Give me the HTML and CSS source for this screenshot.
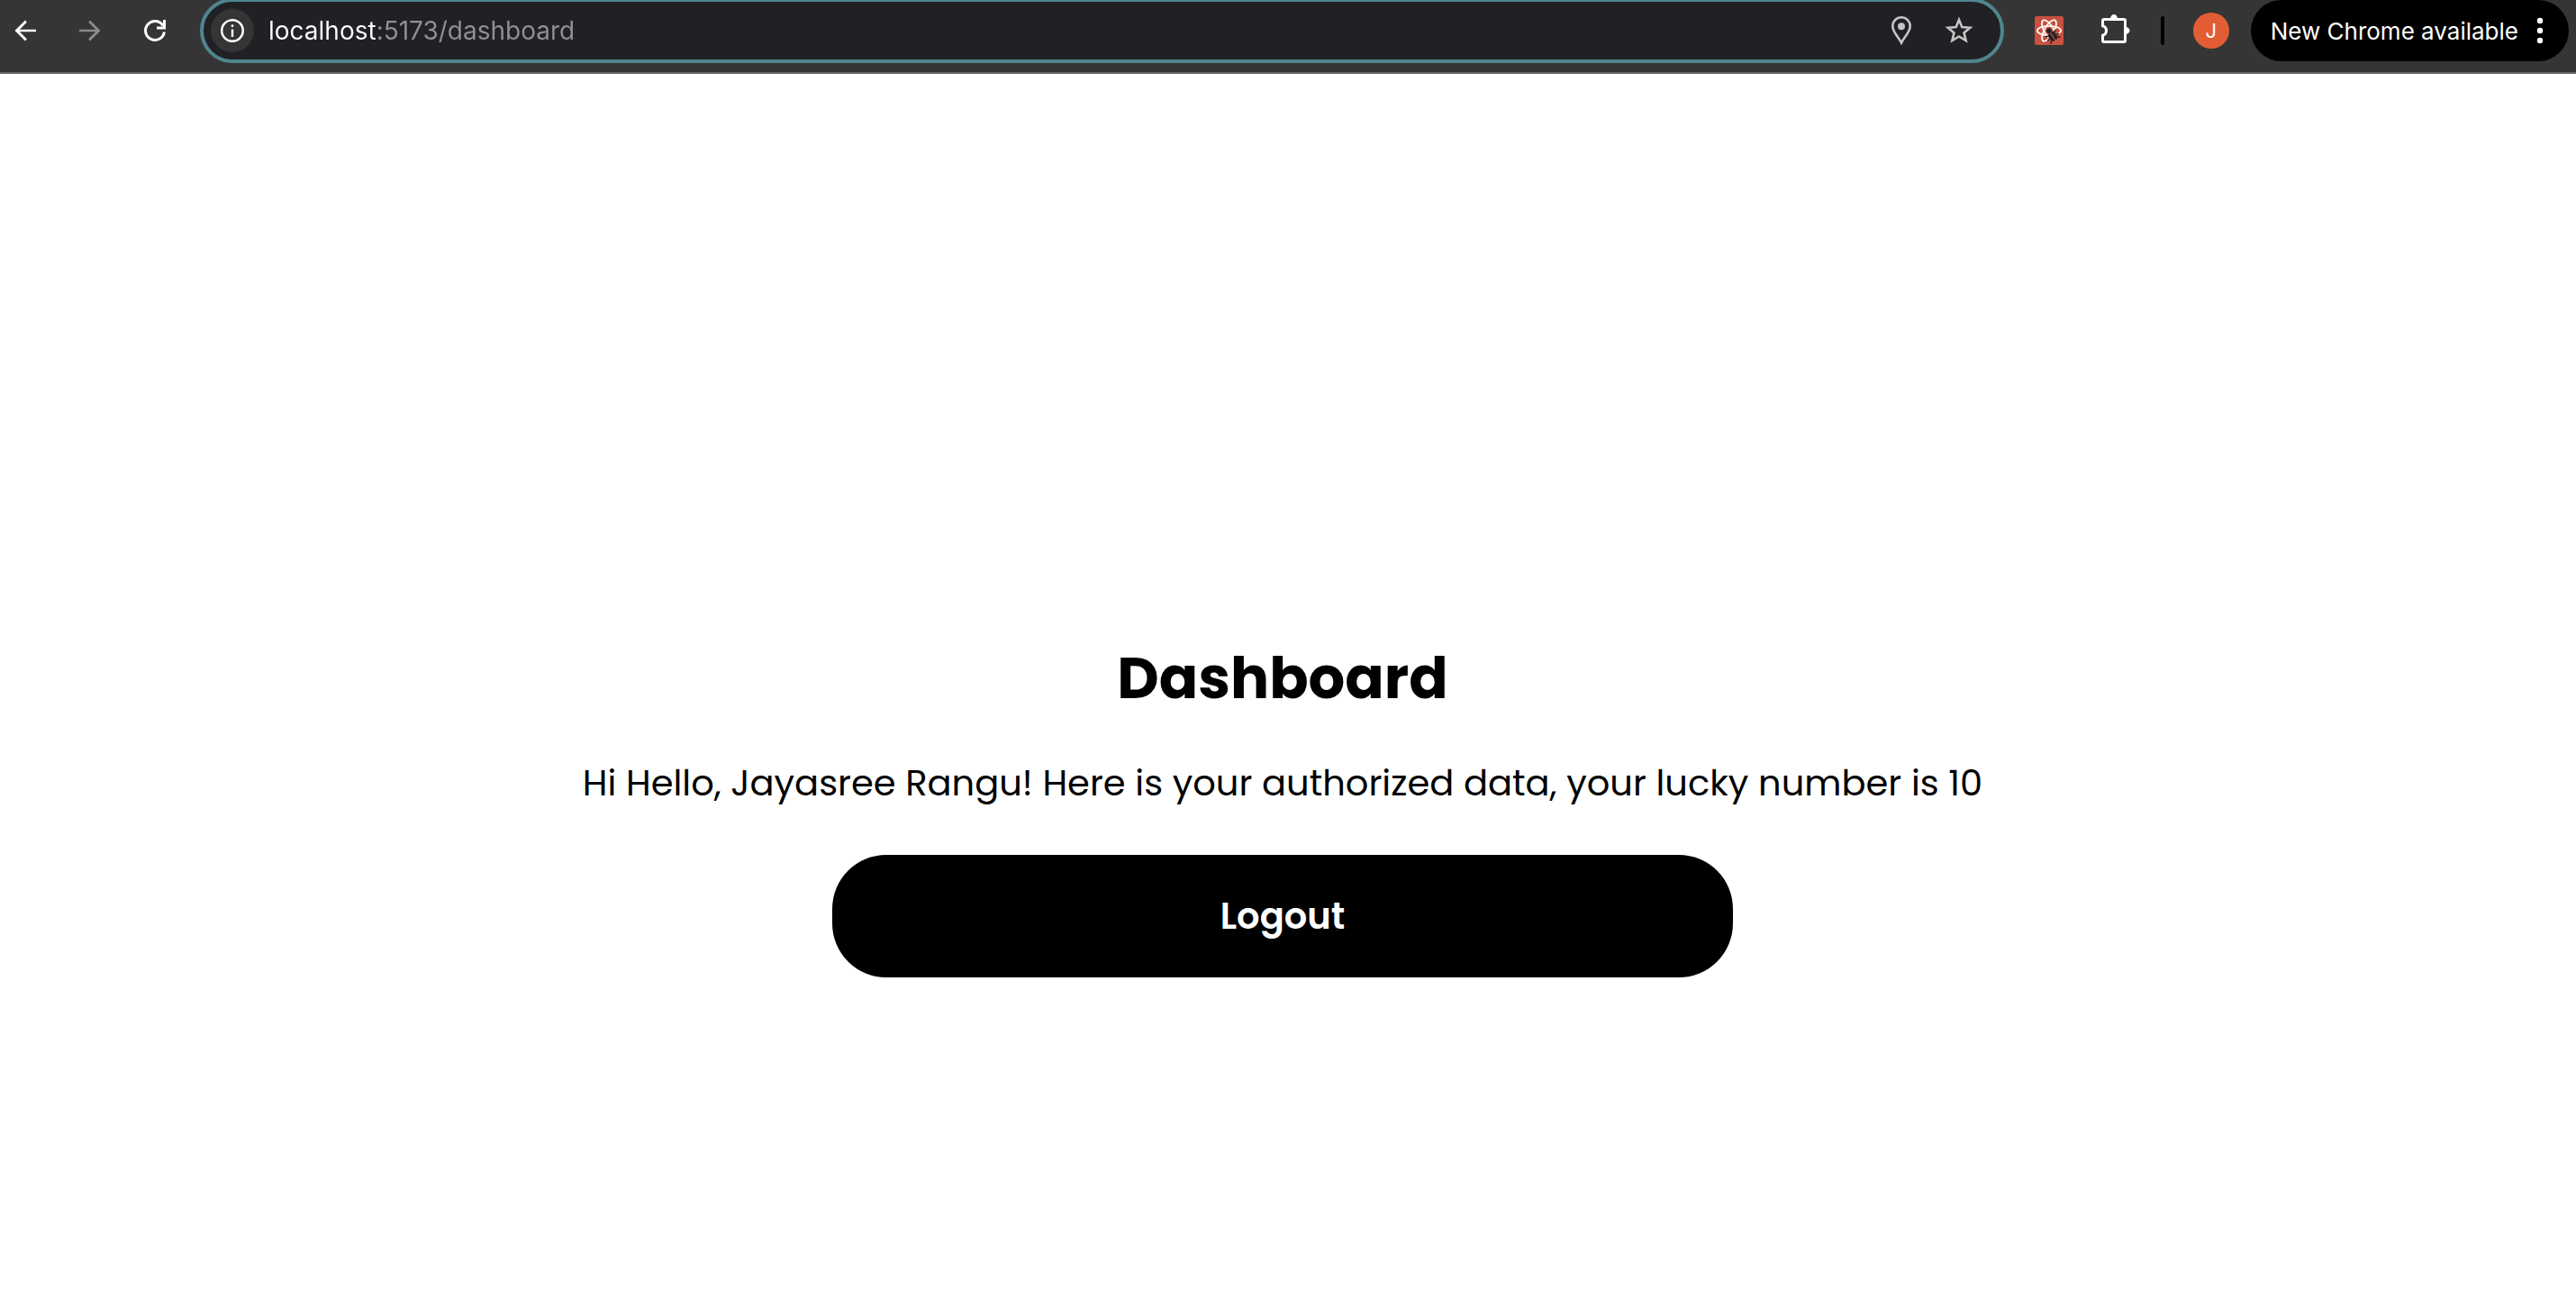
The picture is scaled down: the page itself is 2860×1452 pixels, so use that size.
FILE: index.html
```html
<!DOCTYPE html>
<html lang="en">
<head>
<meta charset="utf-8">
<meta name="viewport" content="width=device-width, initial-scale=1">
<title>Dashboard</title>
<link rel="stylesheet" href="styles.css">
</head>
<body>
<header class="toolbar">
  <nav class="history" aria-label="Navigation">
    <button class="icon-button" type="button" aria-label="Back">
      <svg width="36" height="36" viewBox="0 0 24 24" fill="#fff"><path d="M20 11.1H7.9l5.3-5.3L12 4.4 4.3 12l7.7 7.6 1.2-1.4-5.3-5.3H20z"/></svg>
    </button>
    <button class="icon-button" type="button" aria-label="Forward" disabled>
      <svg width="36" height="36" viewBox="0 0 24 24" fill="#8b8b8b"><path d="M4 11.1h12.1l-5.3-5.3L12 4.400l7.700 7.600-7.700 7.600-1.200-1.400 5.300-5.300H4z"/></svg>
    </button>
    <button class="icon-button" type="button" aria-label="Reload">
      <svg width="36" height="36" viewBox="0 0 36 36" fill="none" stroke="#fff" stroke-width="3"><path d="M28.4 19.5A10.5 10.5 0 1 1 27 12.5"/><path d="M28.5 6v9H20"/></svg>
    </button>
  </nav>
  <form class="omnibox">
    <button class="site-info" type="button" aria-label="View site information">
      <svg width="28" height="28" viewBox="0 0 28 28" fill="none" stroke="#fff"><circle cx="14" cy="14" r="11.8" stroke-width="2.4"/><path d="M14 12.5V21" stroke-width="2.4"/><circle cx="14" cy="8.7" r="1.4" fill="#fff" stroke="none"/></svg>
    </button>
    <input class="address" type="text" aria-label="Address" value="localhost:5173/dashboard">
    <button class="icon-button" type="button" aria-label="Location">
      <svg width="24" height="32" viewBox="0 0 24 32"><path d="M12 1.3A9.7 9.7 0 0 0 2.3 11c0 6.800 6.300 11.500 9.700 18.500C15.400 22.500 21.700 17.800 21.700 11A9.700 9.700 0 0 0 12 1.300z" fill="none" stroke="#c4c4c4" stroke-width="2.600"/><circle cx="12" cy="11.300" r="4" fill="#c4c4c4"/></svg>
    </button>
    <button class="icon-button" type="button" aria-label="Bookmark this page">
      <svg width="32" height="32" viewBox="0 0 32 32" fill="none" stroke="#c4c4c4" stroke-width="2.600"><path d="M16 4l3.300 8 8.900.7-6.700 5.700 2.100 8.600-7.600-4.600-7.600 4.600 2.100-8.600-6.700-5.700 8.900-.7z"/></svg>
    </button>
  </form>
  <div class="extensions">
    <button class="icon-button" type="button" aria-label="React Developer Tools">
      <svg width="32" height="32" viewBox="0 0 32 32"><rect width="32" height="32" rx="2" fill="#c9513f"/><g fill="none" stroke="#fff" stroke-width="1.700"><ellipse cx="16" cy="16" rx="13.200" ry="5.200"/><ellipse cx="16" cy="16" rx="13.200" ry="5.200" transform="rotate(60 16 16)"/><ellipse cx="16" cy="16" rx="13.200" ry="5.200" transform="rotate(120 16 16)"/></g><path d="M15 19.500l8-3.500 4.500 8-6 5.500-6-4z" fill="#c9513f"/><g transform="translate(19.800 22) rotate(-34)"><circle cx="0" cy="-7" r="2.800" fill="#222"/><path d="M-3.800-4h3.200V6C-3 5.500-4.300 3.500-4.300 1zM.6-4h3.200l.5 5C4.300 3.500 3 5.500.6 6z" fill="#222"/><path d="M-7-4l3.500 2M-7.500 1.200h3.500M-6.500 6l3-2.500M7-4L3.500-2M7.500 1.200H4M6.500 6l-3-2.500" stroke="#222" stroke-width="1.500"/></g></svg>
    </button>
    <button class="icon-button" type="button" aria-label="Extensions">
      <svg width="34" height="36" viewBox="0 0 34 36"><path d="M5 5.500h22a1.500 1.500 0 0 1 1.500 1.500v22a1.500 1.500 0 0 1-1.500 1.500H5A1.500 1.500 0 0 1 3.500 29v-5.700a5.500 5.500 0 0 0 0-10.600V7A1.500 1.500 0 0 1 5 5.500z" fill="none" stroke="#fff" stroke-width="3"/><path d="M12 5a4 5 0 0 1 8 0zM29 14a4.500 4 0 0 1 0 8z" fill="#fff"/></svg>
    </button>
  </div>
  <span class="divider"></span>
  <button class="avatar" type="button" aria-label="Profile J">J</button>
  <button class="update" type="button">New Chrome available
    <svg width="8" height="30" viewBox="0 0 8 30" fill="#fff"><circle cx="4" cy="4" r="3.200"/><circle cx="4" cy="15" r="3.200"/><circle cx="4" cy="26" r="3.200"/></svg>
  </button>
</header>
<main class="dashboard">
  <h1 class="title">Dashboard</h1>
  <p class="message">Hi Hello, Jayasree Rangu! Here is your authorized data, your lucky number is 10</p>
  <button class="logout" type="button">Logout</button>
</main>
</body>
</html>
```
FILE: styles.css
```css
* {
  box-sizing: border-box;
}

body {
  margin: 0;
  min-height: 100vh;
  display: flex;
  flex-direction: column;
  background: #fff;
  color: #000;
  font-family: Poppins, Inter, sans-serif;
}

button {
  border: 0;
  padding: 0;
  font-family: inherit;
}

svg {
  display: block;
  flex: none;
}

.toolbar {
  display: flex;
  align-items: center;
  height: 82px;
  padding: 0 8px 12px 10px;
  border-bottom: 2px solid #676263;
  background: #353535;
  font-family: Inter, sans-serif;
}

.history {
  display: flex;
  gap: 36px;
  margin-right: 32px;
}

.icon-button {
  flex: none;
  background: none;
}

.omnibox {
  flex: 1;
  min-width: 0;
  height: 72px;
  display: flex;
  align-items: center;
  padding: 0 30px 0 8px;
  border: 4px solid #4f868e;
  border-radius: 36px;
  background: #202125;
}

.site-info {
  flex: none;
  width: 48px;
  height: 48px;
  display: grid;
  place-items: center;
  border-radius: 50%;
  background: #353535;
}

.address {
  flex: 1;
  min-width: 0;
  margin: 0 36px 0 16px;
  padding: 0;
  border: 0;
  outline: 0;
  background: linear-gradient(to right, #fff 119px, #919191 119px);
  -webkit-background-clip: text;
  background-clip: text;
  color: transparent;
  font-family: Inter, sans-serif;
  font-size: 28px;
  line-height: 36px;
}

.omnibox .icon-button + .icon-button {
  margin-left: 36px;
}

.extensions {
  display: flex;
  align-items: center;
  gap: 40px;
  margin: 0 34px;
}

.divider {
  width: 4px;
  height: 32px;
  border-radius: 2px;
  background: #000;
}

.avatar {
  flex: none;
  width: 40px;
  height: 40px;
  margin: 0 24px 0 32px;
  border-radius: 50%;
  background: #e25d33;
  color: #fff;
  font-size: 22px;
  line-height: 40px;
}

.update {
  flex: none;
  height: 68px;
  display: flex;
  align-items: center;
  gap: 20px;
  padding: 0 28px 0 22px;
  border-radius: 34px;
  background: #000;
  color: #fff;
  font-size: 26px;
  font-weight: 400;
  white-space: nowrap;
}

.dashboard {
  flex: 1;
  display: flex;
  flex-direction: column;
  align-items: center;
  justify-content: center;
  padding: 256px 12px 0 0;
}

.title {
  margin: 0 0 38px;
  font-size: 64px;
  font-weight: 700;
  line-height: 96px;
}

.message {
  margin: 0 0 50px;
  font-size: 40px;
  line-height: 60px;
  text-align: center;
}

.logout {
  width: 100%;
  max-width: 1000px;
  height: 136px;
  border-radius: 60px;
  background: #000;
  color: #fff;
  font-size: 40px;
  font-weight: 600;
}
```
